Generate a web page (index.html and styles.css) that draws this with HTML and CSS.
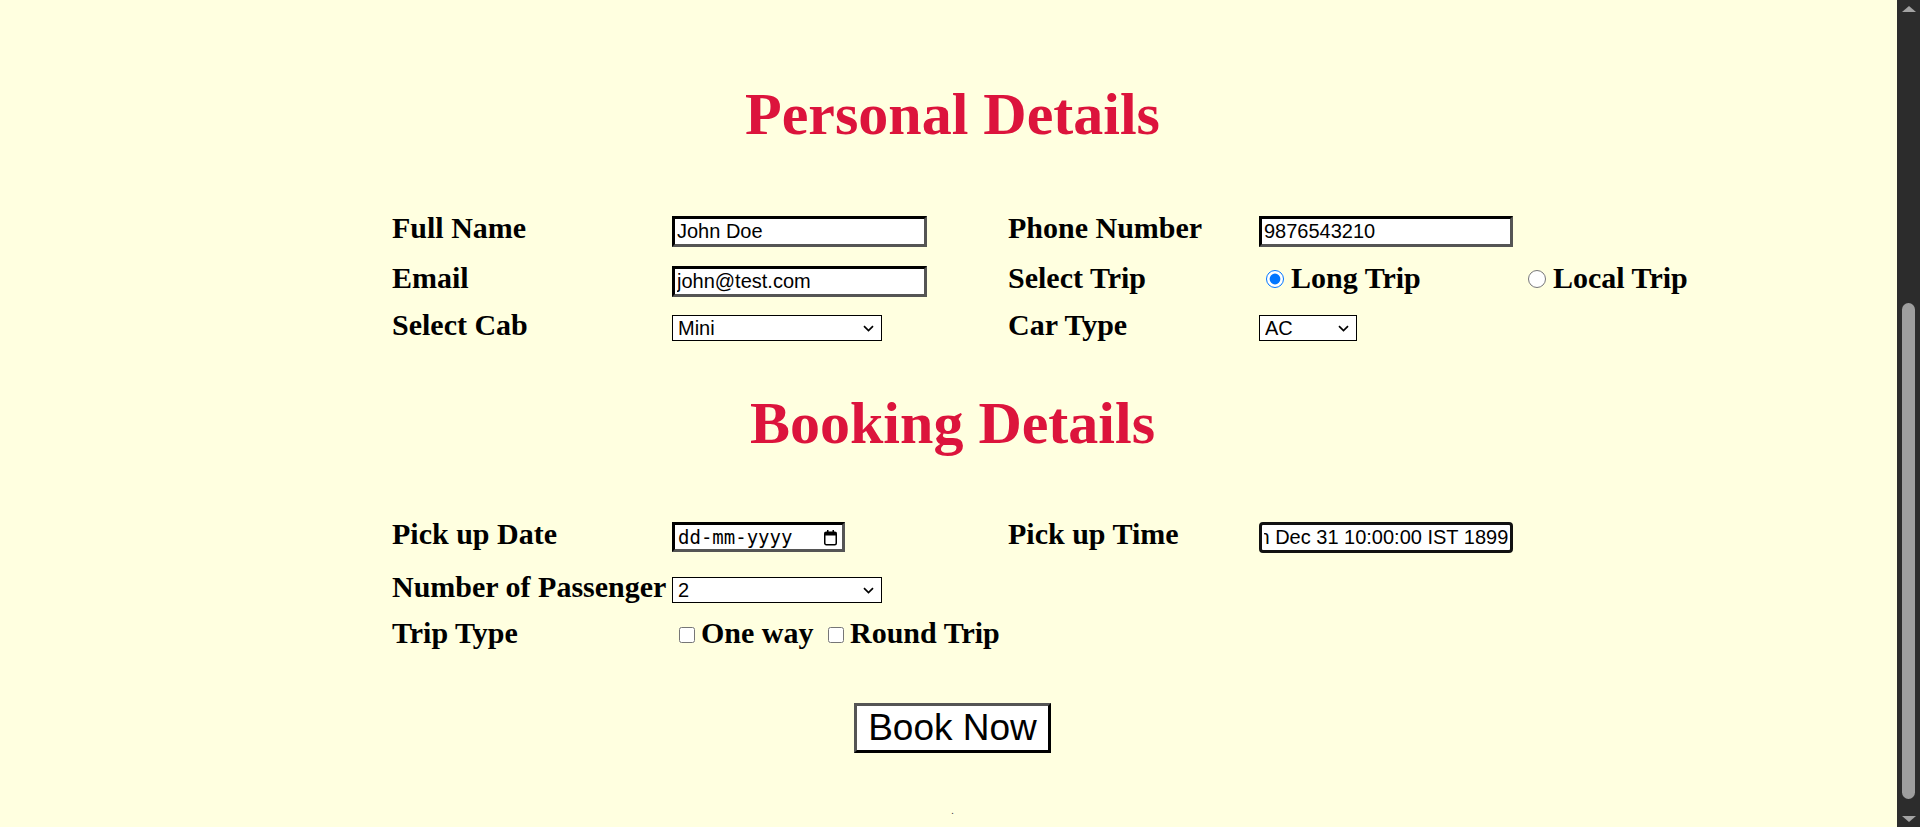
FILE: index.html
```html
<!DOCTYPE html>
<html lang="en">
<head>
<meta charset="utf-8">
<title>Cab Booking</title>
<link rel="stylesheet" href="styles.css">
</head>
<body>
<main class="booking">
  <h2 class="section-title">Personal Details</h2>
  <div class="form-grid form-grid--personal">
    <label class="field-label field-label--first">Full Name</label>
    <input class="text-input" type="text" value="John Doe">
    <label class="field-label">Phone Number</label>
    <input class="text-input text-input--narrow" type="text" value="9876543210">

    <label class="field-label field-label--first">Email</label>
    <input class="text-input" type="email" value="john@test.com">
    <label class="field-label">Select Trip</label>
    <div class="trip-options">
      <label class="option"><input class="radio" type="radio" name="trip" checked>Long Trip</label><label class="option"><input class="radio" type="radio" name="trip">Local Trip</label>
    </div>

    <label class="field-label field-label--first">Select Cab</label>
    <span class="select-wrap">
      <select class="select">
        <option>Mini</option>
        <option>Sedan</option>
        <option>SUV</option>
      </select>
      <svg class="chevron" width="11" height="7" viewBox="0 0 11 7" aria-hidden="true"><path d="M1 1.2 L5.5 5.5 L10 1.2" fill="none" stroke="#000" stroke-width="1.7"/></svg>
    </span>
    <label class="field-label">Car Type</label>
    <span class="select-wrap">
      <select class="select select--small">
        <option>AC</option>
        <option>Non AC</option>
      </select>
      <svg class="chevron" width="11" height="7" viewBox="0 0 11 7" aria-hidden="true"><path d="M1 1.2 L5.5 5.5 L10 1.2" fill="none" stroke="#000" stroke-width="1.7"/></svg>
    </span>
  </div>

  <h2 class="section-title section-title--booking">Booking Details</h2>
  <div class="form-grid form-grid--booking">
    <label class="field-label field-label--first">Pick up Date</label>
    <div class="date-field">
      <input class="date-text" type="text" value="dd-mm-yyyy" readonly>
      <svg class="calendar-icon" width="15" height="17" viewBox="0 0 15 17" aria-hidden="true">
        <rect x="1.75" y="3.25" width="11.5" height="12.5" rx="1.5" fill="none" stroke="#000" stroke-width="1.5"/>
        <rect x="1.75" y="3.25" width="11.5" height="3.25" fill="#000"/>
        <rect x="4" y="1" width="1.5" height="3" fill="#000"/>
        <rect x="9.5" y="1" width="1.5" height="3" fill="#000"/>
      </svg>
    </div>
    <label class="field-label">Pick up Time</label>
    <input class="text-input text-input--narrow time-input" type="text" value="Sun Dec 31 10:00:00 IST 1899">

    <label class="field-label field-label--first">Number of Passenger</label>
    <span class="select-wrap">
      <select class="select">
        <option>1</option>
        <option selected>2</option>
        <option>3</option>
        <option>4</option>
      </select>
      <svg class="chevron" width="11" height="7" viewBox="0 0 11 7" aria-hidden="true"><path d="M1 1.2 L5.5 5.5 L10 1.2" fill="none" stroke="#000" stroke-width="1.7"/></svg>
    </span>

    <label class="field-label field-label--first">Trip Type</label>
    <div class="trip-type">
      <label class="check"><input class="checkbox" type="checkbox">One way</label>
      <label class="check"><input class="checkbox" type="checkbox">Round Trip</label>
    </div>
  </div>

  <div class="actions">
    <button class="book-btn" type="button">Book Now</button>
  </div>
  <p class="note">.</p>
</main>

<div class="scrollbar" aria-hidden="true">
  <span class="scrollbar__btn"><span class="scrollbar__arrow scrollbar__arrow--up"></span></span>
  <span class="scrollbar__track"><span class="scrollbar__thumb"></span></span>
  <span class="scrollbar__btn"><span class="scrollbar__arrow scrollbar__arrow--down"></span></span>
</div>
<script src="script.js"></script>
</body>
</html>
```

FILE: styles.css
```css
html {
  background: lightyellow;
}

body {
  margin: 0;
  padding-right: 15px;
  background: lightyellow;
  color: #000;
  font-family: "Liberation Serif", "Times New Roman", serif;
}

.booking {
  padding-bottom: 10px;
}

.section-title {
  margin: 80px 0 0;
  font-size: 60px;
  line-height: 68px;
  font-weight: bold;
  color: crimson;
  text-align: center;
}

.section-title--booking {
  margin-top: 45px;
}

.form-grid {
  width: 1121px;
  margin: 63px auto 0;
  display: grid;
  grid-template-columns: 280px 336px 251px 254px;
  row-gap: 11px;
  align-items: baseline;
}

.form-grid--personal {
  grid-template-rows: 39px 36px 36px;
}

.form-grid--booking {
  margin-top: 60px;
  grid-template-rows: 42px 35px 35px;
}

.field-label {
  font-size: 30px;
  font-weight: bold;
  white-space: nowrap;
}

.field-label--first {
  grid-column: 1;
}

.text-input {
  box-sizing: border-box;
  width: 255px;
  height: 31px;
  margin: 0;
  padding: 0 2px;
  border: 3px solid;
  border-color: #000 #555 #555 #000;
  background: #fff;
  color: #000;
  font: 20px "Liberation Sans", Arial, sans-serif;
}

.text-input--narrow {
  width: 254px;
}

.time-input {
  border-color: #111;
  border-radius: 4px;
  outline: none;
}

.trip-options {
  white-space: nowrap;
  font-size: 30px;
  font-weight: bold;
}

.option {
  display: inline-block;
  width: 262px;
}

.radio {
  width: 18px;
  height: 18px;
  margin: 0 7px 0 7px;
}

.select-wrap {
  position: relative;
  display: inline-block;
  justify-self: start;
}

.select {
  box-sizing: border-box;
  width: 210px;
  height: 26px;
  margin: 0;
  padding: 0 20px 0 5px;
  border: 1px solid #000;
  border-radius: 0;
  appearance: none;
  background-color: #fff;
  color: #000;
  font: 20px "Liberation Sans", Arial, sans-serif;
}

.select--small {
  width: 98px;
}

.chevron {
  position: absolute;
  right: 8px;
  top: 10px;
  pointer-events: none;
}

.date-field {
  box-sizing: border-box;
  width: 173px;
  height: 30px;
  display: flex;
  align-items: center;
  padding: 0 4px 0 3px;
  border: 3px solid;
  border-color: #000 #555 #555 #000;
  background: #fff;
}

.date-text {
  flex: 1;
  min-width: 0;
  margin: 0;
  padding: 0;
  border: 0;
  outline: none;
  background: transparent;
  color: #000;
  font: 19px "DejaVu Sans Mono", "Liberation Mono", monospace;
}

.calendar-icon {
  flex: none;
  display: block;
}

.trip-type {
  white-space: nowrap;
  font-size: 30px;
  font-weight: bold;
}

.checkbox {
  width: 16px;
  height: 16px;
  margin: 0 6px 0 7px;
}

.actions {
  display: flex;
  justify-content: center;
  margin-top: 52px;
}

.book-btn {
  box-sizing: border-box;
  height: 50px;
  margin: 0;
  padding: 0 11px;
  border: 3px solid;
  border-color: #555 #000 #000 #555;
  border-radius: 0;
  background: #fff;
  color: #000;
  font: 37px "Liberation Sans", Arial, sans-serif;
}

.note {
  margin: 52px 0 0;
  font-size: 10px;
  line-height: 12px;
  text-align: center;
  color: #333;
}

.scrollbar {
  position: fixed;
  top: 0;
  right: 0;
  bottom: 0;
  width: 23px;
  display: flex;
  flex-direction: column;
  align-items: center;
  background: #2c2c2c;
}

.scrollbar__btn {
  flex: none;
  height: 17px;
  display: flex;
  align-items: center;
  justify-content: center;
}

.scrollbar__arrow {
  width: 0;
  height: 0;
  border-left: 7px solid transparent;
  border-right: 7px solid transparent;
}

.scrollbar__arrow--up {
  border-bottom: 6px solid #a3a3a3;
}

.scrollbar__arrow--down {
  border-top: 6px solid #a3a3a3;
}

.scrollbar__track {
  flex: 1;
  display: flex;
  flex-direction: column;
  justify-content: flex-end;
  padding-bottom: 11px;
}

.scrollbar__thumb {
  width: 13px;
  height: 496px;
  border-radius: 7px;
  background: #9e9e9e;
}
```

FILE: script.js
```js
(function () {
  var time = document.querySelector('.time-input');
  function scrollToEnd() {
    if (time) {
      time.scrollLeft = time.scrollWidth;
    }
  }
  scrollToEnd();
  window.addEventListener('load', scrollToEnd);
})();
```
